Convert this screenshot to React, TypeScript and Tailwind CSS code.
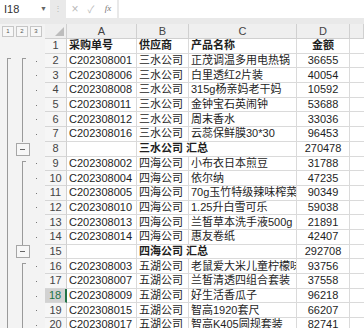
type Row = { a: string; b: string; c: string; d: string; kind?: 'head' | 'sum' }

const rows: Row[] = [
  { a: '采购单号', b: '供应商', c: '产品名称', d: '金额', kind: 'head' },
  { a: 'C202308001', b: '三水公司', c: '正茂调温多用电热锅', d: '36655' },
  { a: 'C202308006', b: '三水公司', c: '白里透红2片装', d: '40054' },
  { a: 'C202308008', b: '三水公司', c: '315g杨亲妈老干妈', d: '10592' },
  { a: 'C202308011', b: '三水公司', c: '金钟宝石英闹钟', d: '53688' },
  { a: 'C202308012', b: '三水公司', c: '周末香水', d: '33036' },
  { a: 'C202308016', b: '三水公司', c: '云蕊保鲜膜30*30', d: '96453' },
  { a: '', b: '三水公司 汇总', c: '', d: '270478', kind: 'sum' },
  { a: 'C202308002', b: '四海公司', c: '小布衣日本煎豆', d: '31788' },
  { a: 'C202308004', b: '四海公司', c: '依尔纳', d: '47235' },
  { a: 'C202308005', b: '四海公司', c: '70g玉竹特级辣味榨菜', d: '90349' },
  { a: 'C202308010', b: '四海公司', c: '1.25升白雪可乐', d: '59038' },
  { a: 'C202308013', b: '四海公司', c: '兰皙草本洗手液500g', d: '21891' },
  { a: 'C202308014', b: '四海公司', c: '惠友卷纸', d: '42407' },
  { a: '', b: '四海公司 汇总', c: '', d: '292708', kind: 'sum' },
  { a: 'C202308003', b: '五湖公司', c: '老鼠爱大米儿童柠檬味', d: '93756' },
  { a: 'C202308007', b: '五湖公司', c: '兰皙清透四组合套装', d: '37558' },
  { a: 'C202308009', b: '五湖公司', c: '好生活香瓜子', d: '96218' },
  { a: 'C202308015', b: '五湖公司', c: '智高1920套尺', d: '66207' },
  { a: 'C202308017', b: '五湖公司', c: '智高K405圆规套装', d: '82741' },
]

const font = { fontFamily: '"Liberation Sans", "Noto Sans CJK SC", sans-serif' }

// outline bracket for one level
function Level({ mode }: { mode: 'none' | 'start' | 'line' | 'btn' }) {
  if (mode === 'btn') {
    return (
      <div className="w-[15px] h-full flex items-center justify-center">
        <div className="w-[14px] h-[13px] border border-[#a6a6a6] bg-[#f7f7f7] flex items-center justify-center">
          <div className="w-[5px] h-px bg-[#666]" />
        </div>
      </div>
    )
  }
  return (
    <div className="w-[15px] h-full flex justify-center">
      {mode !== 'none' && (
        <div className={`w-px h-full bg-[#9a9a9a] ${mode === 'start' ? 'mt-[4px]' : ''} relative`}>
          {mode === 'start' && <div className="absolute top-0 left-0 w-[4px] h-px bg-[#9a9a9a]" />}
        </div>
      )}
    </div>
  )
}

function Gutter({ i }: { i: number }) {
  const r = rows[i]
  if (r.kind === 'head') return <div className="w-[45px] h-full bg-[#f3f3f3]" />
  const l1 = i === 1 ? 'start' : 'line'
  const l2 = r.kind === 'sum' ? 'btn' : i === 1 || i === 8 || i === 15 ? 'start' : 'line'
  return (
    <div className="w-[45px] h-full bg-[#f3f3f3] flex">
      <Level mode={l1} />
      <Level mode={l2} />
      <div className="w-[15px] h-full flex items-center justify-center pr-[2px]">
        {r.kind !== 'sum' && <div className="w-px h-px bg-[#777]" />}
      </div>
    </div>
  )
}

export default function App() {
  return (
    <div className="w-[364px] h-[328px] overflow-hidden bg-white text-[11px] text-[#1e1e1e]" style={font}>
      {/* formula bar */}
      <div className="h-[24px] bg-[#e9e9e9] flex items-start">
        <div className="w-[50px] h-[18px] bg-white flex items-center justify-between pl-[4px] pr-[3px]">
          <span className="text-[#333]">I18</span>
          <span className="text-[7px] text-[#666]">▼</span>
        </div>
        <div className="w-[16px] h-[18px] flex items-center justify-center text-[#b5b5b5] text-[8px]">⋮</div>
        <div className="w-[51px] h-[18px] bg-white flex items-center text-[#b9b9b9]">
          <span className="w-[16px] text-center text-[12px] ml-[1px]">×</span>
          <span className="w-[16px] text-center text-[10px]">✓</span>
          <span className="w-[18px] text-center text-[9px] italic text-[#777]" style={{ fontFamily: '"Liberation Serif", serif' }}>fx</span>
        </div>
        <div className="flex-1 h-[18px] bg-white ml-[2px]" />
      </div>

      {/* column headers */}
      <div className="flex h-[15px]">
        <div className="w-[45px] h-full bg-[#f3f3f3] flex items-center pl-[2px] gap-[2px]">
          {['1', '2', '3'].map(n => (
            <div key={n} className="w-[12px] h-[11px] border border-[#c6c6c6] bg-[#f7f7f7] flex items-center justify-center text-[6px] text-[#555]">
              {n}
            </div>
          ))}
        </div>
        <div className="w-[22px] h-full bg-[#efefef] border-r border-b border-[#d0d0d0] flex items-end justify-end pr-[2px] pb-[2px]">
          <div className="w-0 h-0 border-l-[9px] border-l-transparent border-b-[9px] border-b-[#bdbdbd]" />
        </div>
        {[['A', 'w-[70px]'], ['B', 'w-[52px]'], ['C', 'w-[108px]'], ['D', 'w-[53px]'], ['', 'flex-1']].map(([l, w]) => (
          <div key={l} className={`${w} h-full bg-[#efefef] border-r border-b border-[#d0d0d0] flex items-center justify-center text-[#444]`}>
            {l}
          </div>
        ))}
      </div>

      {/* sheet rows */}
      {rows.map((r, i) => {
        const bold = r.kind ? 'font-bold' : ''
        const sel = i === 17
        return (
          <div key={i} className="flex h-[14.7px] leading-none">
            <Gutter i={i} />
            <div
              className={`w-[22px] h-full border-b border-[#d6d6d6] flex items-center justify-center ${
                sel ? 'bg-[#d2d2d2] text-[#217346] border-r-2 border-r-[#217346]' : 'bg-[#f6f6f6] text-[#444] border-r border-r-[#d0d0d0]'
              }`}
            >
              {i + 1}
            </div>
            <div className={`w-[70px] h-full border-r border-b border-[#dadada] flex items-center pl-[2px] overflow-hidden whitespace-nowrap ${bold}`}>
              {r.a}
            </div>
            {r.kind === 'sum' ? (
              <div className="w-[160px] h-full border-r border-b border-[#dadada] flex items-center pl-[2px] font-bold whitespace-nowrap">
                {r.b}
              </div>
            ) : (
              <>
                <div className={`w-[52px] h-full border-r border-b border-[#dadada] flex items-center pl-[2px] overflow-hidden whitespace-nowrap ${bold}`}>
                  {r.b}
                </div>
                <div className={`w-[108px] h-full border-r border-b border-[#dadada] flex items-center pl-[2px] overflow-hidden whitespace-nowrap ${bold}`}>
                  {r.c}
                </div>
              </>
            )}
            <div className={`w-[53px] h-full border-r border-b border-[#dadada] flex items-center justify-center whitespace-nowrap ${r.kind === 'head' ? 'font-bold' : ''}`}>
              {r.d}
            </div>
            <div className="flex-1 h-full border-b border-[#dadada]" />
          </div>
        )
      })}
    </div>
  )
}
